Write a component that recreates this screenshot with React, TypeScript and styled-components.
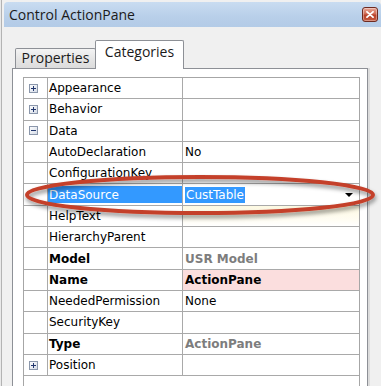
import React from "react";
import styled, { createGlobalStyle } from "styled-components";

const Global = createGlobalStyle`
  html, body { margin: 0; padding: 0; background: #e9e9e9; }
  body { width: 381px; height: 386px; overflow: hidden; }
`;

const Root = styled.div`
  position: relative;
  width: 381px;
  height: 386px;
  overflow: hidden;
  box-sizing: border-box;
  padding-left: 1px;
  background: #e9e9e9;
`;

const Window = styled.div`
  width: 380px;
  height: 386px;
  box-sizing: border-box;
  border-left: 1px solid #b3b3b3;
  background: #f0f0f0;
  padding: 2px 0 0 2px;
  display: flex;
  flex-direction: column;
`;

const TitleBar = styled.div`
  height: 25px;
  flex: none;
  box-sizing: border-box;
  border-radius: 4px 4px 0 0;
  background: linear-gradient(#c9dcf1, #b8cfe9 60%, #b3cbe7);
  display: flex;
  align-items: center;
  justify-content: space-between;
  padding: 0 3px 0 5px;
`;

const Title = styled.span`
  font-family: "Open Sans", "Noto Sans", sans-serif;
  font-size: 14px;
  color: #1b1b1b;
  line-height: 20px;
`;

const CloseButton = styled.div`
  width: 16px;
  height: 15px;
  box-sizing: border-box;
  border-radius: 3px;
  border: 1px solid #6e2a20;
  background: linear-gradient(#e9a898, #cf6a54 45%, #b8412a 55%, #c65a40);
  display: flex;
  align-items: center;
  justify-content: center;
  box-shadow: inset 0 0 0 1px rgba(255, 255, 255, 0.35);
`;

const TabStrip = styled.div`
  display: flex;
  align-items: flex-end;
  margin: 13px 0 0 11px;
  height: 28px;
  flex: none;
  position: relative;
  z-index: 1;
`;

const Tab = styled.div<{ $active?: boolean }>`
  box-sizing: border-box;
  font-family: "Open Sans", "Noto Sans", sans-serif;
  font-size: 14px;
  color: #1b1b1b;
  text-align: center;
  border: 1px solid #8d9096;
  border-bottom: none;
  border-radius: 2px 2px 0 0;
  ${(p) =>
    p.$active
      ? `
    width: 89px;
    height: 29px;
    margin-left: -1px;
    margin-bottom: -1px;
    background: #ffffff;
    line-height: 22px;
    position: relative;
  `
      : `
    width: 81px;
    height: 20px;
    background: linear-gradient(#f4f4f4, #e6e6e6 50%, #dcdcdc);
    line-height: 17px;
  `}
`;

const Panel = styled.div`
  flex: none;
  height: 340px;
  box-sizing: border-box;
  margin: 0 0 0 8px;
  width: 356px;
  border: 1px solid #8d9096;
  background: #ffffff;
  padding: 8px 7px 0 10px;
  box-shadow: 2px 0 0 #dcdcdc;
`;

const Grid = styled.div`
  height: 100%;
  box-sizing: border-box;
  border: 1px solid #a6a6a6;
  border-bottom: none;
  font-family: "DejaVu Sans", Verdana, sans-serif;
  font-size: 12px;
  color: #000;
`;

const Row = styled.div`
  display: grid;
  grid-template-columns: 24px 135px 1fr;
  height: 21.3px;
  box-sizing: border-box;
  border-bottom: 1px solid #a9a9a9;
`;

const Gutter = styled.div`
  border-right: 1px solid #a9a9a9;
  display: flex;
  align-items: center;
  padding-left: 5px;
`;

const NameCell = styled.div<{ $bold?: boolean; $selected?: boolean }>`
  border-right: 1px solid #a9a9a9;
  display: flex;
  align-items: center;
  padding-left: 1px;
  white-space: nowrap;
  overflow: hidden;
  font-weight: ${(p) => (p.$bold ? 700 : 400)};
  ${(p) =>
    p.$selected
      ? `
    background: #3399ff;
    color: #ffffff;
    box-shadow: inset 0 2px 0 #fff, inset 0 -2px 0 #fff;
  `
      : ""}
`;

const ValueCell = styled.div<{
  $bold?: boolean;
  $muted?: boolean;
  $flagged?: boolean;
  $tint?: boolean;
}>`
  display: flex;
  align-items: center;
  padding: 0 6px 0 2px;
  white-space: nowrap;
  overflow: hidden;
  font-weight: ${(p) => (p.$bold ? 700 : 400)};
  color: ${(p) => (p.$muted ? "#7d7d7d" : "#000")};
  background: ${(p) =>
    p.$flagged
      ? "#fbdede"
      : p.$tint
      ? "linear-gradient(#fdf9e2, #fffdf3 70%, #ffffff)"
      : "transparent"};
`;

const Selection = styled.span`
  background: #3399ff;
  color: #ffffff;
  padding: 1px 1px;
  line-height: 14px;
`;

const DropArrow = styled.span`
  margin-left: auto;
  width: 0;
  height: 0;
  border-left: 4px solid transparent;
  border-right: 4px solid transparent;
  border-top: 4px solid #000;
`;

const Overlay = styled.svg`
  position: absolute;
  left: 0;
  top: 0;
  pointer-events: none;
`;

type RowData = {
  name: string;
  expand?: "+" | "-";
  value?: string;
  bold?: boolean;
  muted?: boolean;
  flagged?: boolean;
  selected?: boolean;
  tint?: boolean;
};

const rows: RowData[] = [
  { name: "Appearance", expand: "+" },
  { name: "Behavior", expand: "+" },
  { name: "Data", expand: "-" },
  { name: "AutoDeclaration", value: "No" },
  { name: "ConfigurationKey" },
  { name: "DataSource", value: "CustTable", selected: true },
  { name: "HelpText", tint: true },
  { name: "HierarchyParent" },
  { name: "Model", bold: true, value: "USR Model", muted: true },
  { name: "Name", bold: true, value: "ActionPane", flagged: true },
  { name: "NeededPermission", value: "None" },
  { name: "SecurityKey" },
  { name: "Type", bold: true, value: "ActionPane", muted: true },
  { name: "Position", expand: "+" },
];

const Expander = ({ sign }: { sign: "+" | "-" }) => (
  <svg width="9" height="9" viewBox="0 0 9 9">
    <defs>
      <linearGradient id="expg" x1="0" y1="0" x2="1" y2="1">
        <stop offset="0" stopColor="#ffffff" />
        <stop offset="1" stopColor="#d3dae6" />
      </linearGradient>
    </defs>
    <rect x="0.5" y="0.5" width="8" height="8" fill="url(#expg)" stroke="#8b97ab" />
    <path d="M2 4.5h5" stroke="#22376e" strokeWidth="1" />
    {sign === "+" && <path d="M4.5 2v5" stroke="#22376e" strokeWidth="1" />}
  </svg>
);

export default function App() {
  return (
    <>
      <Global />
      <Root>
        <Window>
          <TitleBar>
            <Title>Control ActionPane</Title>
            <CloseButton>
              <svg width="8" height="7" viewBox="0 0 8 7">
                <path
                  d="M1 0.8L7 6.2M7 0.8L1 6.2"
                  stroke="#ffffff"
                  strokeWidth="1.8"
                  strokeLinecap="round"
                />
              </svg>
            </CloseButton>
          </TitleBar>
          <TabStrip>
            <Tab>Properties</Tab>
            <Tab $active>Categories</Tab>
          </TabStrip>
          <Panel>
            <Grid>
              {rows.map((r) => (
                <Row key={r.name}>
                  <Gutter>{r.expand && <Expander sign={r.expand} />}</Gutter>
                  <NameCell $bold={r.bold} $selected={r.selected}>
                    {r.name}
                  </NameCell>
                  <ValueCell
                    $bold={r.bold}
                    $muted={r.muted}
                    $flagged={r.flagged}
                    $tint={r.tint}
                  >
                    {r.selected ? (
                      <>
                        <Selection>{r.value}</Selection>
                        <DropArrow />
                      </>
                    ) : (
                      r.value
                    )}
                  </ValueCell>
                </Row>
              ))}
            </Grid>
          </Panel>
        </Window>
        <Overlay width="381" height="386" viewBox="0 0 381 386">
          <defs>
            <filter id="shadow" x="-10%" y="-50%" width="120%" height="200%">
              <feDropShadow dx="1" dy="3" stdDeviation="2" floodColor="#000" floodOpacity="0.45" />
            </filter>
          </defs>
          <ellipse
            cx="200"
            cy="195"
            rx="173"
            ry="18"
            fill="none"
            stroke="#c4412b"
            strokeWidth="4"
            filter="url(#shadow)"
          />
        </Overlay>
      </Root>
    </>
  );
}
